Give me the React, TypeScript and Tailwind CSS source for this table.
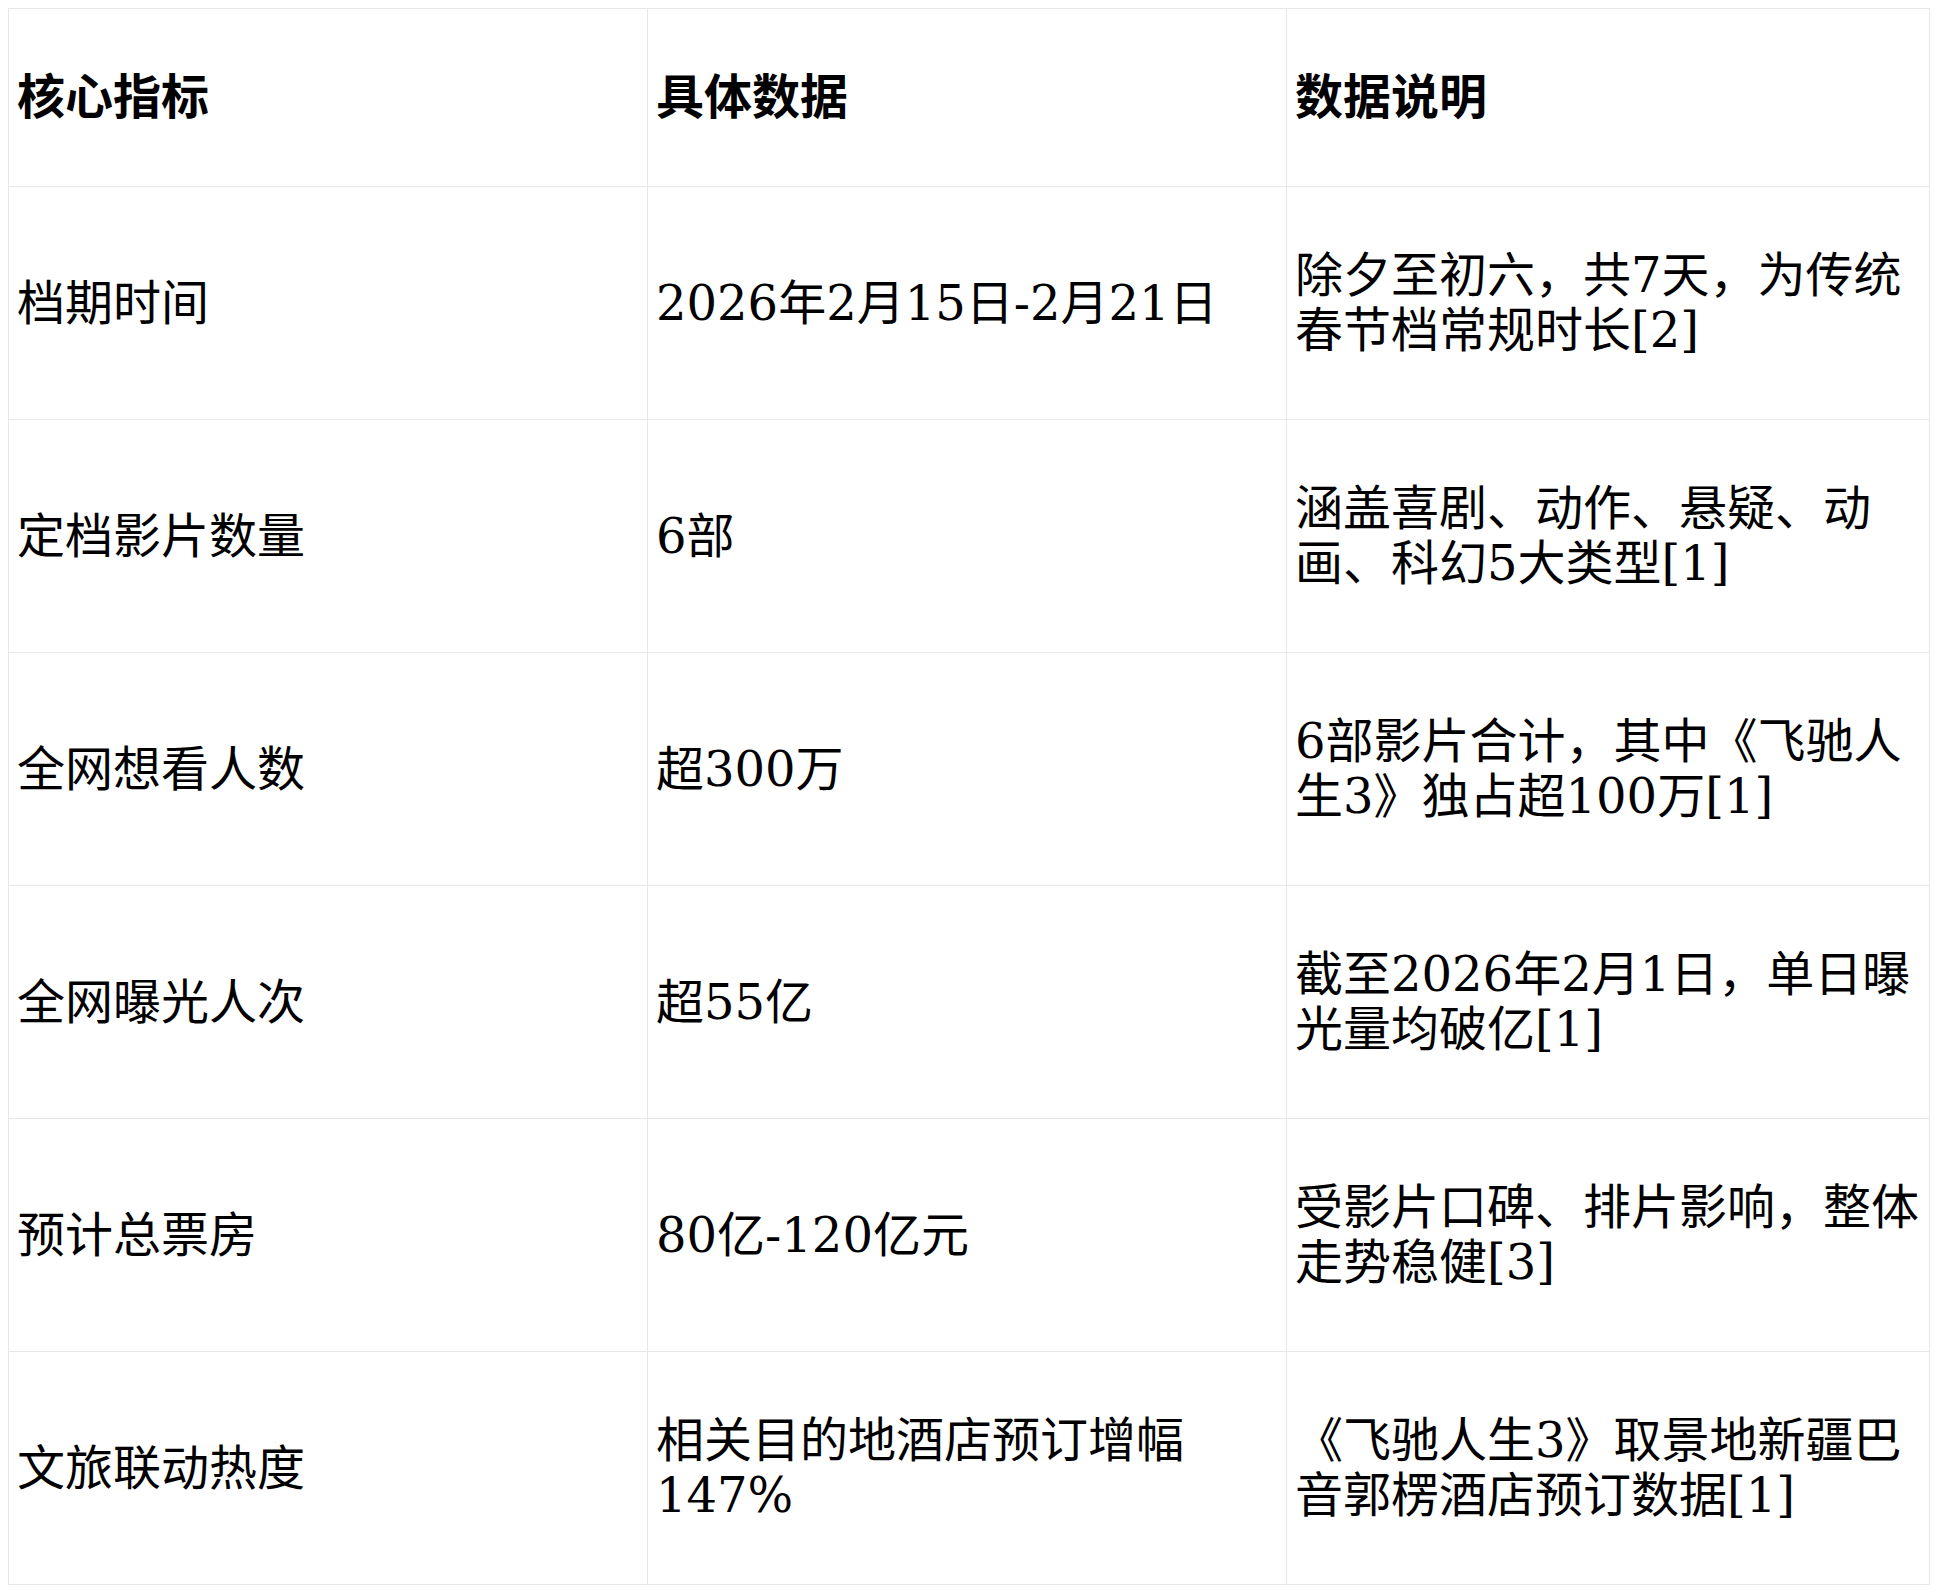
const rows: [string, string, string][] = [
  ['档期时间', '2026年2月15日-2月21日', '除夕至初六，共7天，为传统春节档常规时长[2]'],
  ['定档影片数量', '6部', '涵盖喜剧、动作、悬疑、动画、科幻5大类型[1]'],
  ['全网想看人数', '超300万', '6部影片合计，其中《飞驰人生3》独占超100万[1]'],
  ['全网曝光人次', '超55亿', '截至2026年2月1日，单日曝光量均破亿[1]'],
  ['预计总票房', '80亿-120亿元', '受影片口碑、排片影响，整体走势稳健[3]'],
  ['文旅联动热度', '相关目的地酒店预订增幅147%', '《飞驰人生3》取景地新疆巴音郭楞酒店预订数据[1]'],
]

export default function App() {
  return (
    <div className="p-2 bg-white text-black font-['DejaVu_Serif','Noto_Sans_CJK_SC',serif] text-[48px] leading-[55px]">
      <table className="table-fixed border-collapse w-[1921px]">
        <colgroup>
          <col className="w-[639px]" />
          <col className="w-[639px]" />
          <col className="w-[643px]" />
        </colgroup>
        <thead>
          <tr className="h-[178px]">
            <th className="border border-[#e5e7eb] px-2 text-left align-middle font-bold">核心指标</th>
            <th className="border border-[#e5e7eb] px-2 text-left align-middle font-bold">具体数据</th>
            <th className="border border-[#e5e7eb] px-2 text-left align-middle font-bold">数据说明</th>
          </tr>
        </thead>
        <tbody>
          {rows.map(([a, b, c]) => (
            <tr key={a} className="h-[233px]">
              <td className="border border-[#e5e7eb] px-2 align-middle">{a}</td>
              <td className="border border-[#e5e7eb] px-2 align-middle">{b}</td>
              <td className="border border-[#e5e7eb] px-2 align-middle">{c}</td>
            </tr>
          ))}
        </tbody>
      </table>
    </div>
  )
}
